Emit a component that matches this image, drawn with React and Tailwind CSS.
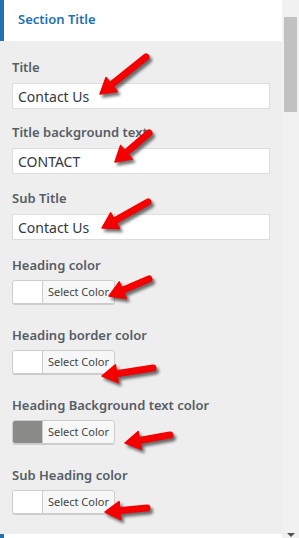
import React from 'react';

const font = { fontFamily: '"Noto Sans", "Open Sans", Arial, sans-serif' };

// red annotation arrows (tail -> tip), page coordinates
const arrows = [
  [146, 57, 100, 94],
  [149, 133, 115, 162],
  [148, 202, 102, 228],
  [149, 279, 109, 296],
  [153, 368, 102, 376],
  [170, 435, 125, 443],
  [147, 508, 105, 512],
];

function Arrow({ x1, y1, x2, y2 }) {
  const dx = x2 - x1;
  const dy = y2 - y1;
  const len = Math.sqrt(dx * dx + dy * dy);
  const ux = dx / len;
  const uy = dy / len;
  const headLen = 15;
  const headW = 9;
  const bx = x2 - ux * headLen;
  const by = y2 - uy * headLen;
  const px = -uy;
  const py = ux;
  const head = `${x2},${y2} ${bx + px * headW},${by + py * headW} ${bx - px * headW},${by - py * headW}`;
  const shape = (
    <>
      <line x1={x1} y1={y1} x2={bx + ux * 2} y2={by + uy * 2} strokeWidth="7" strokeLinecap="round" />
      <polygon points={head} strokeWidth="1.5" strokeLinejoin="round" />
    </>
  );
  return (
    <g>
      <g transform="translate(2.5,3)" fill="#000" stroke="#000" opacity="0.55" filter="url(#blur)">
        {shape}
      </g>
      <g fill="#f40000" stroke="#f40000">{shape}</g>
    </g>
  );
}

function TextField({ label, value, className }) {
  return (
    <div className={className}>
      <div className="h-[18px] text-[13px] leading-[18px] font-semibold text-[#555d66]">{label}</div>
      <div className="mt-[7px] h-[26px] w-[258px] bg-white border border-[#dddddd] flex items-center px-[5px] text-[14px] text-[#32373c]">
        {value}
      </div>
    </div>
  );
}

function ColorField({ label, swatch, className }) {
  return (
    <div className={className}>
      <div className="h-[18px] text-[13px] leading-[18px] font-semibold text-[#555d66]">{label}</div>
      <div className="mt-[6px] h-[24px] w-[103px] flex rounded-[3px] border border-[#cccccc] shadow-[0_1px_0_#cccccc] overflow-hidden">
        <div className="w-[30px] border-r border-[#cccccc]" style={{ background: swatch }} />
        <div className="flex-1 bg-[#f7f7f7] flex items-center justify-center text-[11px] text-[#444444]">Select Color</div>
      </div>
    </div>
  );
}

export default function App() {
  return (
    <div className="relative w-[299px] h-[538px] flex overflow-hidden bg-[#eeeeee]" style={font}>
      <div className="w-[282px] flex flex-col">
        <div className="h-[41px] bg-white border-l-4 border-[#2271b1] flex items-center pl-[14px] pb-[2px]">
          <span className="text-[13px] font-semibold text-[#2271b1]">Section Title</span>
        </div>

        <div className="flex-1 px-[12px] pt-[17px]">
          <TextField label="Title" value="Contact Us" />
          <TextField label="Title background text" value="CONTACT" className="mt-[14px]" />
          <TextField label="Sub Title" value="Contact Us" className="mt-[15px]" />
          <ColorField label="Heading color" swatch="#ffffff" className="mt-[16px]" />
          <ColorField label="Heading border color" swatch="#ffffff" className="mt-[22px]" />
          <ColorField label="Heading Background text color" swatch="#8a8b88" className="mt-[22px]" />
          <ColorField label="Sub Heading color" swatch="#ffffff" className="mt-[22px]" />
        </div>

        <div className="h-[4px] bg-white border-l-4 border-[#2271b1]" />
      </div>

      {/* scrollbar */}
      <div className="w-[17px] bg-[#f1f1f1] flex flex-col items-center">
        <div className="mt-[17px] h-[95px] w-[13px] bg-[#c1c1c1]" />
        <div className="flex-1" />
        <div className="mb-[1px] w-0 h-0 border-l-[4px] border-r-[4px] border-t-[4px] border-l-transparent border-r-transparent border-t-[#505050]" />
      </div>

      <svg className="absolute inset-0 pointer-events-none" width="299" height="538">
        <defs>
          <filter id="blur" x="-20%" y="-20%" width="140%" height="140%">
            <feGaussianBlur stdDeviation="1.5" />
          </filter>
        </defs>
        {arrows.map(([x1, y1, x2, y2], i) => (
          <Arrow key={i} x1={x1} y1={y1} x2={x2} y2={y2} />
        ))}
      </svg>
    </div>
  );
}
